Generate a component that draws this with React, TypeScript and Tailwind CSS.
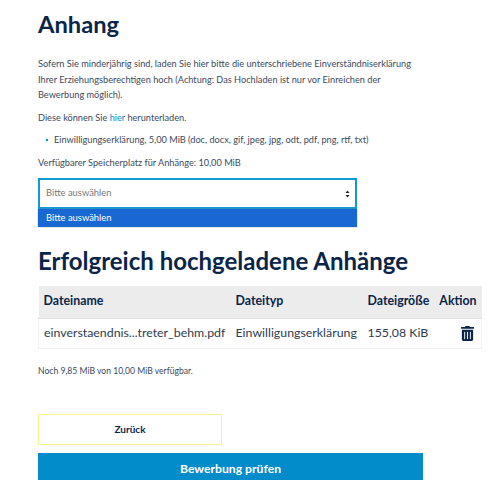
import { FaTrashAlt } from 'react-icons/fa';

export default function App() {
  return (
    <div className="w-[494px] h-[480px] overflow-hidden bg-white pl-[38px] pt-[8px] text-[#3a4a5e] font-['Lato',sans-serif]">
      <h1 className="text-[23.7px] leading-[32px] font-bold text-[#0b2549]">Anhang</h1>

      <div className="mt-[16px] w-[385px] text-[9.2px] leading-[15.5px]">
        <p>
          Sofern Sie minderjährig sind, laden Sie hier bitte die unterschriebene Einverständniserklärung Ihrer
          Erziehungsberechtigen hoch (Achtung: Das Hochladen ist nur vor Einreichen der Bewerbung möglich).
        </p>
        <p className="mt-[7px]">
          Diese können Sie <a className="text-[#0f8fc9]">hier</a> herunterladen.
        </p>
        <ul className="mt-[7px] pl-[8px]">
          <li className="flex items-center gap-[5px]">
            <span className="w-[2px] h-[2px] bg-[#0f8fc9]" />
            <span className="ml-[1px]">Einwilligungserklärung, 5,00 MiB (doc, docx, gif, jpeg, jpg, odt, pdf, png, rtf, txt)</span>
          </li>
        </ul>
        <p className="mt-[7px]">Verfügbarer Speicherplatz für Anhänge: 10,00 MiB</p>
      </div>

      <div className="mt-[8px] w-[319px] text-[9.4px]">
        <div className="h-[31px] border-2 border-[#0f9bd7] bg-white flex items-center justify-between pl-[6px] pr-[5px] text-[#77797c]">
          <span>Bitte auswählen</span>
          <svg width="5" height="8" viewBox="0 0 5 8" className="text-[#222]">
            <path d="M2.5 0.5 L4.5 3 L0.5 3 Z M2.5 7.5 L4.5 5 L0.5 5 Z" fill="currentColor" />
          </svg>
        </div>
        <div className="h-[18px] bg-[#1967d2] flex items-center pl-[8px] text-white shadow-[0_0_1px_#777]">Bitte auswählen</div>
      </div>

      <h2 className="mt-[18px] text-[24px] leading-[32px] font-bold text-[#0b2549] whitespace-nowrap">Erfolgreich hochgeladene Anhänge</h2>

      <table className="mt-[9px] w-[444px] table-fixed border-collapse text-[12.35px] text-[#2c3b50]">
        <thead>
          <tr className="h-[32px] bg-[#ececec] text-[#0b2549] border-b border-[#e0e0e0]">
            <th className="w-[192px] pl-[5px] text-left font-bold">Dateiname</th>
            <th className="w-[132px] pl-[5px] text-left font-bold">Dateityp</th>
            <th className="w-[72px] pl-[5px] text-left font-bold whitespace-nowrap">Dateigröße</th>
            <th className="pr-[5px] text-right font-bold">Aktion</th>
          </tr>
        </thead>
        <tbody>
          <tr className="h-[30px] border border-[#f0f0f0]">
            <td className="pl-[5px] whitespace-nowrap">einverstaendnis...treter_behm.pdf</td>
            <td className="pl-[5px] whitespace-nowrap">Einwilligungserklärung</td>
            <td className="pl-[5px] whitespace-nowrap">155,08 KiB</td>
            <td className="pr-[6px]">
              <div className="flex justify-end">
                <FaTrashAlt size={15} className="text-[#0b2549]" />
              </div>
            </td>
          </tr>
        </tbody>
      </table>

      <p className="mt-[16px] text-[8.6px] leading-[12px]">Noch 9,85 MiB von 10,00 MiB verfügbar.</p>

      <button className="mt-[37px] block w-[184px] h-[31px] border-[1.5px] border-[#f8f08a] bg-white text-[10px] font-bold text-[#0b2549]">
        Zurück
      </button>
      <button className="mt-[8px] block w-[385px] h-[40px] pb-[7px] bg-[#038cca] text-[12.2px] font-bold text-white">
        Bewerbung prüfen
      </button>
    </div>
  );
}
